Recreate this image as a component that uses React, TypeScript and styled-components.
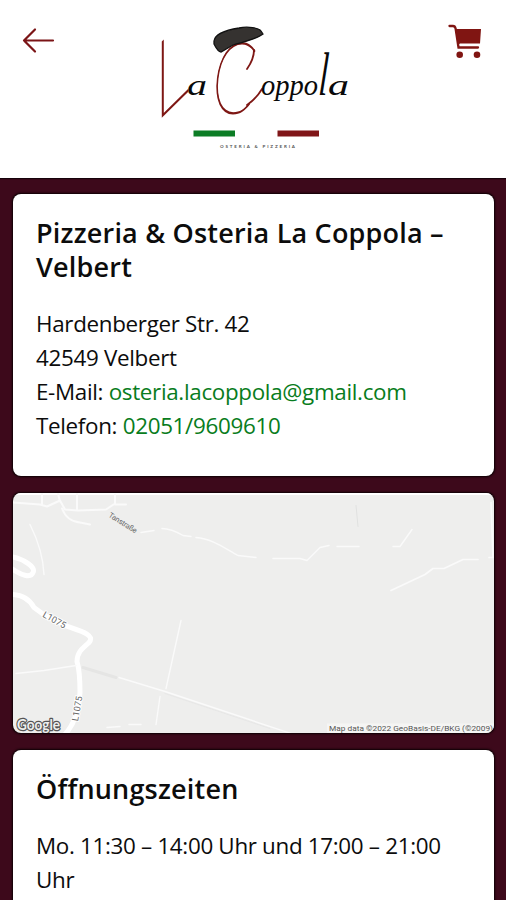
import React from "react";
import styled, { createGlobalStyle } from "styled-components";

const GlobalStyle = createGlobalStyle`
  html, body { margin: 0; background: #3d091b; }
  * { box-sizing: border-box; }
`;

const Screen = styled.div`
  width: 506px;
  height: 900px;
  overflow: hidden;
  display: flex;
  flex-direction: column;
  background: #3d091b;
  color: #0c0c0c;
  font-family: "Open Sans", "Noto Sans", sans-serif;
`;

const Header = styled.header`
  flex: none;
  height: 178px;
  padding: 16px 20px 0 20px;
  display: flex;
  justify-content: space-between;
  align-items: flex-start;
  background: #fff;
  box-shadow: 0 1px 1px #16020a;
`;

const IconButton = styled.button`
  width: 40px;
  height: 50px;
  padding: 0;
  border: 0;
  background: none;
  svg { display: block; }
`;

const Logo = styled.svg`
  display: block;
  width: 210px;
  height: 145px;
  overflow: visible;
`;

const Content = styled.main`
  display: flex;
  flex-direction: column;
  gap: 16.5px;
  padding: 16px 12px 0 13px;
`;

const Card = styled.section<{ $height: number }>`
  flex: none;
  height: ${(p) => p.$height}px;
  padding: 22px 23px;
  overflow: hidden;
  border-radius: 8px;
  background: #fff;
  box-shadow: 0 0 2px 0.5px #0b0003;
`;

const MapCard = styled(Card)`
  padding: 0;
  background: #eeeeed;
  svg { display: block; }
`;

const Title = styled.h2`
  margin: 0 0 24px;
  font-size: 27px;
  line-height: 33.7px;
  font-weight: 580;
  letter-spacing: 0.2px;
`;

const Text = styled.p`
  margin: 0;
  font-size: 22.4px;
  line-height: 33.7px;
  letter-spacing: -0.32px;
`;

const Link = styled.a`
  color: #087c20;
  text-decoration: none;
`;

const BackIcon = () => (
  <svg width="40" height="50" viewBox="20 16 40 50" fill="none" stroke="#7b1416" strokeWidth="2.2" strokeLinecap="round" strokeLinejoin="round">
    <path d="M53 40.5H24M35 29.5L24 40.5L35 51.5" />
  </svg>
);

const CartIcon = () => (
  <svg width="40" height="50" viewBox="446 16 40 50">
    <path d="M449.5 26H453Q455 26 455.6 28.5L458.5 47.5H478" fill="none" stroke="#801512" strokeWidth="2.3" strokeLinecap="round" />
    <path d="M455 29H481L480 43.5H460Q457.5 45 460 47L458 44Z" fill="#801512" />
    <circle cx="459.7" cy="54.7" r="3.3" fill="#801512" />
    <circle cx="477" cy="54.7" r="3.3" fill="#801512" />
  </svg>
);

const Brand = () => (
  <Logo viewBox="148 16 210 145">
    <g fontFamily="Lato, sans-serif" fontWeight="100" fill="#7e1714" stroke="#7e1714">
      <text transform="matrix(1 -0.98 0 1.4 154.5 124)" fontSize="76" strokeWidth="1.3" textLength="34" lengthAdjust="spacingAndGlyphs">L</text>
      <text transform="matrix(.62 0 -.12 1 209 113)" fontSize="99" strokeWidth="1.3">C</text>
      <path d="M254 50Q254 59 247 69M247 105Q256 99 262 89" fill="none" strokeWidth="1.8" strokeLinecap="round" />
    </g>
    <g fontFamily="'Liberation Serif', serif" fontStyle="italic" fill="#090909">
      <text x="187" y="95" fontSize="29" textLength="20" lengthAdjust="spacingAndGlyphs">a</text>
      <text x="261" y="95" fontSize="29" textLength="57" lengthAdjust="spacingAndGlyphs">oppo</text>
      <text transform="matrix(.8 0 -.1 1.5 318 95)" fontSize="41">l</text>
      <text x="328" y="95" fontSize="29" textLength="21" lengthAdjust="spacingAndGlyphs">a</text>
    </g>
    <path d="M214 41C215 34 226 30 239 28C248 26 259 28 261 31L263 34C257 39 243 42 233 45L221 52Q218 52 214 44Z" fill="#353230" stroke="#111" strokeWidth="1.3" />
    <path fill="#0c7d25" d="M193.5 130.5h41.5v6h-41.5z" />
    <path fill="#801618" d="M277.5 130.5H319v6h-41.5z" />
    <text x="220" y="148" fontFamily="Lato, sans-serif" fontSize="4.5" fontWeight="700" fill="#555" textLength="75">OSTERIA &amp; PIZZERIA</text>
  </Logo>
);

const AreaMap = () => (
  <svg width="481" height="241" viewBox="13 492.5 481 241" fill="none" stroke="#fafafa" strokeLinecap="round" strokeLinejoin="round">
    <path stroke="#fff" strokeWidth="2" d="M13 493.5H494" />
    <g strokeWidth="2">
      <path d="M13 502L40 504L47 506L60 500L65 509L78 510L106 509L115 503V494M42 493V504M58 493L60 501M77 493V510M115 504H126M62 508Q67 521 80 522L90 524" />
    </g>
    <path strokeWidth="1.4" d="M30 524Q43 550 44 574M141 532L154 530M162 528Q171 528 183 535L191 536M196 537C212 538 225 548 238 555L256 557M273 558H300L307 560L320 547L329 545M337 546L359 546M393 546H400L412 529" />
    <path strokeWidth="1.7" d="M391 590L425 574L433 568H444L463 559H478M489 557H493L491 502" />
    <path stroke="#e0e1e0" d="M356 505L358 526" />
    <path stroke="#fff" strokeWidth="5" d="M10 556C24 558 36 567 33 572C31 578 21 575 10 567M10 594C21 594 29 598 34 607L45 615L65 625C79 630 96 634 89 642C82 648 77 652 77 661C80 671 80 681 80 692C79 710 74 724 65 734" />
    <path strokeWidth="1.4" d="M16 673L44 670L76 665M119 677L165 691L294 734M181 620L166 688M160 696L156 724M107 727L120 726M129 724H141" />
    <path stroke="#e5e5e4" strokeWidth="3" d="M83 667L116 677" />
    <path stroke="#e5e5e4" strokeWidth=".8" d="M165 693L270 728" />
    <g stroke="none" fill="#666" fontFamily="Roboto, sans-serif">
      <text transform="translate(108 516) rotate(32)" fontSize="7.5" textLength="32">Tanstraße</text>
      <text transform="translate(42 616) rotate(29)" fontSize="9" textLength="25" stroke="#fff" strokeWidth="2" paintOrder="stroke">L1075</text>
      <text transform="translate(78 721) rotate(-80)" fontSize="9" textLength="25" stroke="#fff" strokeWidth="2" paintOrder="stroke">L1075</text>
    </g>
    <text x="17" y="729" fontFamily="Lato, sans-serif" fontSize="16" fontWeight="700" fill="#eee" stroke="#555" strokeWidth="2.6" paintOrder="stroke" textLength="43" lengthAdjust="spacingAndGlyphs">Google</text>
    <path d="M327 723H494V734H327Z" fill="#f5f5f4" stroke="none" />
    <text x="329" y="730" fontFamily="Roboto, sans-serif" fontSize="7.5" fill="#555" stroke="none" textLength="164" lengthAdjust="spacingAndGlyphs">Map data ©2022 GeoBasis-DE/BKG (©2009)</text>
  </svg>
);

export default function App() {
  return (
    <>
      <GlobalStyle />
      <Screen>
        <Header>
          <IconButton aria-label="Zurück"><BackIcon /></IconButton>
          <Brand />
          <IconButton aria-label="Warenkorb"><CartIcon /></IconButton>
        </Header>
        <Content>
          <Card $height={282}>
            <Title>Pizzeria &amp; Osteria La Coppola –<br />Velbert</Title>
            <Text>
              Hardenberger Str. 42<br />42549 Velbert<br />
              E-Mail: <Link>osteria.lacoppola@gmail.com</Link><br />
              Telefon: <Link>02051/9609610</Link>
            </Text>
          </Card>
          <MapCard $height={240.5}><AreaMap /></MapCard>
          <Card $height={190}>
            <Title>Öffnungszeiten</Title>
            <Text>Mo. 11:30 – 14:00 Uhr und 17:00 – 21:00 Uhr</Text>
          </Card>
        </Content>
      </Screen>
    </>
  );
}
